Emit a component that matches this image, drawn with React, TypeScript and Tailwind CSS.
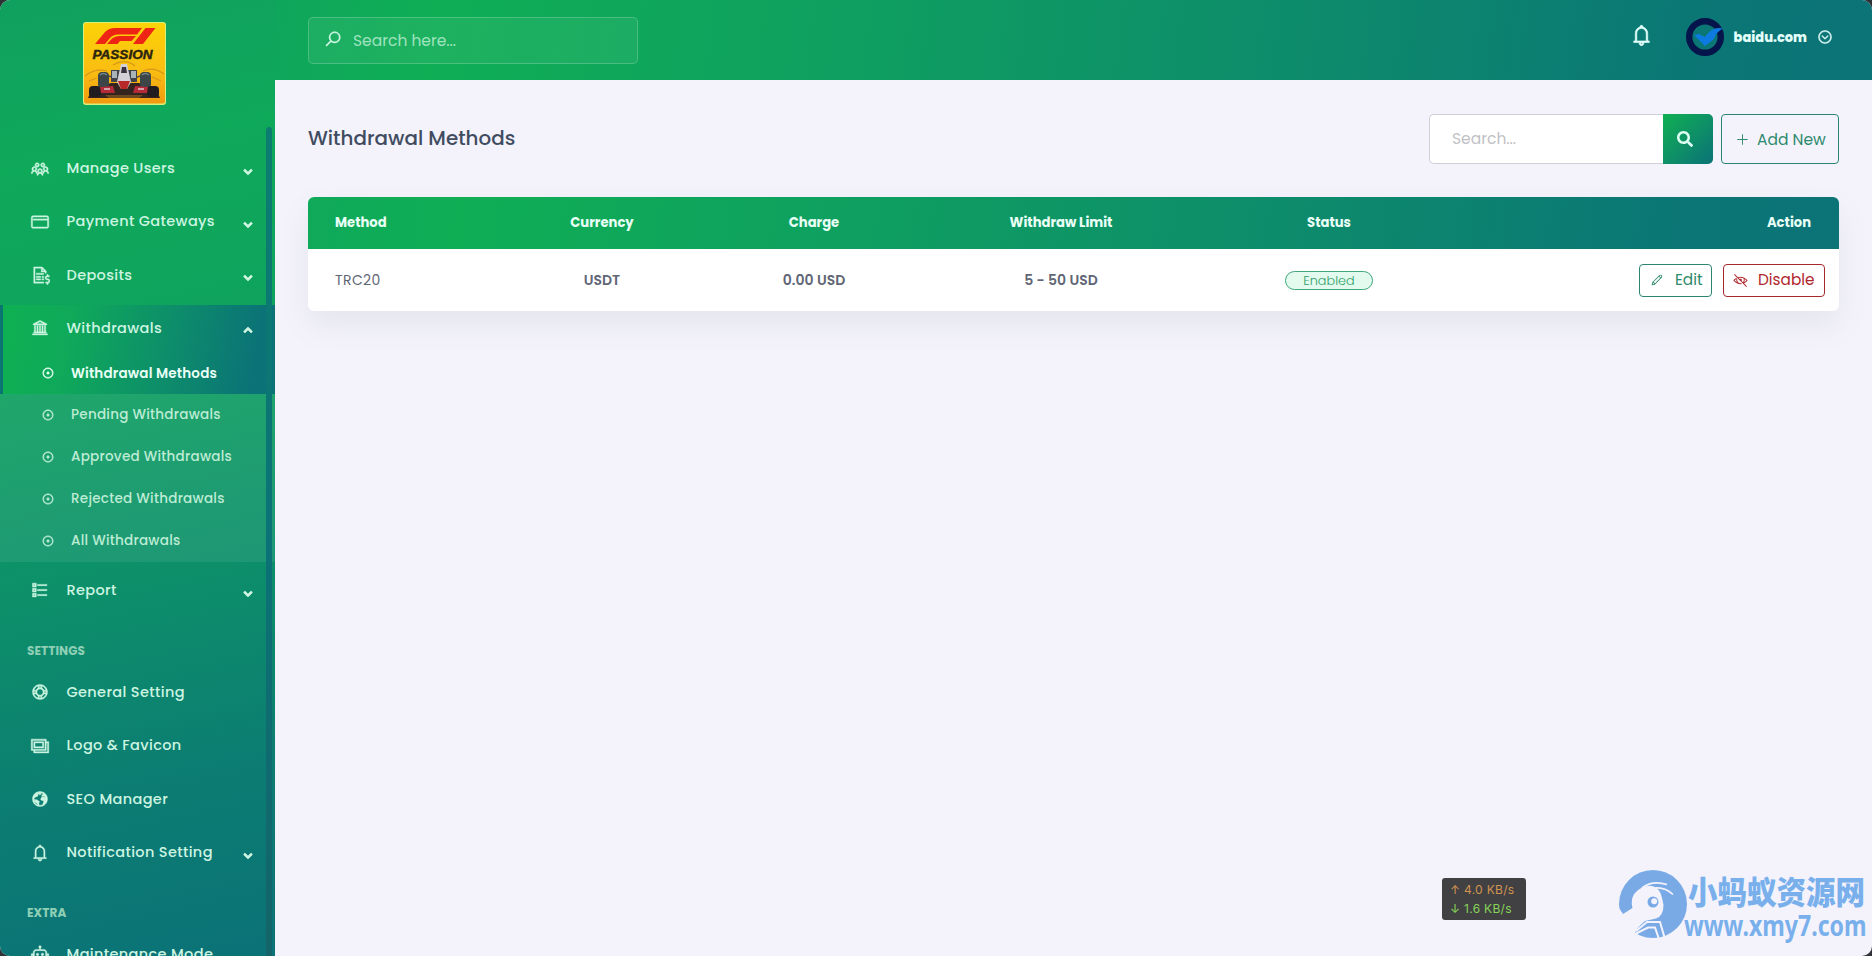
import type { ComponentType, ReactNode } from "react";
import {
  LiaUsersSolid, LiaCreditCard, LiaFileInvoiceDollarSolid, LiaUniversitySolid, LiaDotCircle, LiaListSolid,
  LiaLifeRing, LiaImages, LiaGlobeSolid, LiaBell, LiaRobotSolid, LiaSearchSolid, LiaChevronCircleDownSolid,
  LiaPlusSolid, LiaPenSolid, LiaEyeSlash,
} from "react-icons/lia";
import { FaAngleDown, FaAngleUp, FaSearch } from "react-icons/fa";

type Icon = ComponentType<{ className?: string }>;

function MenuItem({ icon: I, label, arrow }: { icon: Icon; label: string; arrow?: "up" | "down" }) {
  return (
    <a className="flex h-[46px] shrink-0 items-center pl-[30px] pr-[20px] pt-px text-[#cdf5e2]">
      <I className="size-5 shrink-0 [stroke-width:0.7px]" />
      <span className="ml-[16.500px] flex-1 whitespace-nowrap pt-px text-[14.5px] font-medium tracking-[0.350px]">{label}</span>
      {arrow === "down" && <FaAngleDown className="mt-[7px] size-[14px] [stroke-width:20px]" />}
      {arrow === "up" && <FaAngleUp className="mt-[3px] size-[14px] [stroke-width:20px]" />}
    </a>
  );
}

function SubItem({ label, active }: { label: string; active?: boolean }) {
  return (
    <a className={"flex h-[42px] items-center pl-[41px] " + (active ? "pt-[3px] text-[#e9fff6]" : "text-[#bdecd5]")}>
      <LiaDotCircle className="size-[14px] [stroke-width:1px]" />
      <span className={"ml-4 whitespace-nowrap pt-px text-[13.5px] " + (active ? "font-semibold tracking-[0.180px]" : "font-medium tracking-[0.270px]")}>{label}</span>
    </a>
  );
}

function Heading({ children }: { children: ReactNode }) {
  return <div className="flex h-5 items-center pl-[27px] text-[12px] font-bold tracking-[0.100px] text-[#8fcfb6]">{children}</div>;
}

function Logo() {
  return (
    <svg viewBox="0 0 83 83" className="size-[83px]">
      <defs>
        <linearGradient id="sun" x1="0" y1="0" x2="0" y2="1">
          <stop offset="0" stopColor="#fcd307" /><stop offset=".6" stopColor="#f9bd12" /><stop offset="1" stopColor="#f09a10" />
        </linearGradient>
      </defs>
      <rect width="83" height="83" rx="3" fill="#d8f07c" />
      <rect x="1" y="1" width="81" height="80.500" rx="2" fill="url(#sun)" />
      <path d="M12 22 L22 10 Q26 6 32 6 H59 L54 12.500 H35 Q30 12.500 27 16 L22 22Z M24 22 L29 16.500 Q32 14 36 14 H53 L48.500 19 H37 L34.500 22Z M50 22 L62.500 6 H72.500 L60 22Z" fill="#ee2414" />
      <text x="9.500" y="36.500" textLength="60" lengthAdjust="spacingAndGlyphs" fontFamily="Liberation Sans" fontWeight="bold" fontStyle="italic" fontSize="12" stroke="#2a2410" strokeWidth=".4" fill="#2a2410">PASSION</text>
      <path d="M2 54 Q12 46 24 49 M6 59 L14 56 M60 49 Q70 44 81 52 M69 55 L78 59 M30 43 Q42 36 52 44" stroke="#d8981a" strokeWidth="1.200" fill="none" />
      <path d="M5 76 L9 67 L28 61 H56 L73 67 L77 76Z" fill="#33241f" />
      <path d="M22 73 H60 L56 76 H26Z" fill="#6b4a22" />
      <path d="M19 52 L32 56 L36 60 M64 52 L51 56 L47 60" stroke="#55504c" strokeWidth="1.500" fill="none" />
      <rect x="15" y="50" width="11" height="16" rx="4" fill="#3c4548" /><rect x="57" y="50" width="11" height="16" rx="4" fill="#3c4548" />
      <path d="M17 53 Q20 50 24 53 M59 53 Q62 50 66 53" stroke="#74868a" strokeWidth="1.500" fill="none" />
      <path d="M28 48 H54 V60 H28Z" fill="#42424a" /><path d="M29 49 H34 V56 H29Z M48 49 H53 V56 H48Z" fill="#a9b3ba" />
      <path d="M38 42 H44 L48 60 L44 67 H38 L34 60Z" fill="#d3d0d6" /><path d="M39 45 H43 L44 51 H38Z" fill="#3a3440" /><path d="M35 59 H47 L44 67 H38Z" fill="#b82828" />
      <rect x="6" y="64" width="12" height="11" rx="4" fill="#201c20" /><rect x="64" y="64" width="12" height="11" rx="4" fill="#201c20" />
      <path d="M17 65 L30 64 L32 71 H18Z M65 65 L52 64 L50 71 H64Z" fill="#b32b38" />
      <path d="M21 67 H27 M55 67 H61" stroke="#e3c6cc" strokeWidth="1.600" />
    </svg>
  );
}

function Ant() {
  return (
    <svg viewBox="0 0 70 70" className="size-[70px]">
      <circle cx="35" cy="35" r="34" fill="#79aae6" />
      <path d="M-1 36 L5 45 L14.500 39 Q11 25 24 18.500 Q37 13 42.500 24 Q44 28 45.500 36 Q45.500 47 38 49.500 L27 52 Q22 56 19 60 L17 64 L14 70 H-1Z" fill="#f4f3fc" />
      <path d="M24 19 Q34 11 49 15.500 M32 20 Q45 16 55 25.500" stroke="#f4f3fc" strokeWidth="1.700" fill="none" />
      <circle cx="35" cy="33" r="5.500" fill="#79aae6" /><circle cx="36.200" cy="32.200" r="3" fill="#f4f3fc" />
      <path d="M18 62 L29 53 H42 L47 70" stroke="#f4f3fc" strokeWidth="2" fill="none" />
      <path d="M18 64.500 L30 58.500 H37 L41 70" stroke="#f4f3fc" strokeWidth="2" fill="none" />
    </svg>
  );
}

const cols = "grid grid-cols-[195px_198px_226px_268px_268px_1fr] items-center text-center";

export default function App() {
  return (
    <div className="h-[956px] w-[1872px] overflow-hidden bg-[#2f3236]">
      <div className="relative flex h-full overflow-hidden rounded-[10px] bg-[#f4f3fc] font-['Poppins','Inter',sans-serif]">
        <aside className="relative flex h-full w-[275px] shrink-0 flex-col overflow-hidden bg-[linear-gradient(168deg,#10a05f_0%,#0fa95a_17%,#0fa45d_33%,#0d9169_58%,#0c7d72_80%,#0b7277_100%)]">
          <div className="flex h-[145px] shrink-0 pl-[83px] pt-[22px]"><Logo /></div>
          <div className="flex flex-col gap-[7.200px]">
            <MenuItem icon={LiaUsersSolid} label="Manage Users" arrow="down" />
            <MenuItem icon={LiaCreditCard} label="Payment Gateways" arrow="down" />
            <MenuItem icon={LiaFileInvoiceDollarSolid} label="Deposits" arrow="down" />
          </div>
          <div className="mt-[7.400px] border-l-[3px] border-[#0b7574] bg-[linear-gradient(100deg,#0fb052_0%,#0fa95a_25%,#0d8c6b_62%,#0b7277_92%)] pb-px">
            <div className="-ml-[3px]">
              <MenuItem icon={LiaUniversitySolid} label="Withdrawals" arrow="up" />
              <SubItem label="Withdrawal Methods" active />
            </div>
          </div>
          <div className="bg-white/[0.070]">
            <SubItem label="Pending Withdrawals" />
            <SubItem label="Approved Withdrawals" />
            <SubItem label="Rejected Withdrawals" />
            <SubItem label="All Withdrawals" />
          </div>
          <div className="mt-[5px]"><MenuItem icon={LiaListSolid} label="Report" arrow="down" /></div>
          <div className="mt-[28px]"><Heading>SETTINGS</Heading></div>
          <div className="mt-[8px] flex flex-col gap-[7.500px]">
            <MenuItem icon={LiaLifeRing} label="General Setting" />
            <MenuItem icon={LiaImages} label="Logo & Favicon" />
            <MenuItem icon={LiaGlobeSolid} label="SEO Manager" />
            <MenuItem icon={LiaBell} label="Notification Setting" arrow="down" />
          </div>
          <div className="mt-[28px]"><Heading>EXTRA</Heading></div>
          <div className="mt-[8px]"><MenuItem icon={LiaRobotSolid} label="Maintenance Mode" /></div>
          <div className="absolute bottom-0 right-[3px] top-[127px] w-[6px] rounded-t bg-[linear-gradient(#0c7d70,#0b7277_50%,#146469)]" />
        </aside>

        <main className="flex flex-1 flex-col">
          <header className="flex h-20 shrink-0 items-start bg-[linear-gradient(98deg,#0fa65c_0%,#0fae55_10%,#0fa15f_33%,#0d8a6c_66%,#0b7775_88%,#0c7377_100%)] pl-[33px]">
            <div className="mt-[17px] flex h-[47px] w-[330px] items-center rounded-[5px] border border-white/20 bg-white/[0.060] pl-[15px]">
              <LiaSearchSolid className="-mt-1 size-[18px] text-[#d5fbe8] [stroke-width:0.8px]" />
              <span className="ml-[11px] text-[15.5px] text-[#9fe3bf]">Search here...</span>
            </div>
            <div className="ml-auto mt-[18px] flex h-[38px] items-center pr-[39px] text-[#e2fffb]">
              <LiaBell className="-mt-[3px] mr-[32px] size-[25px] [stroke-width:0.8px]" />
              <svg viewBox="0 0 38 38" className="size-[38px]">
                <circle cx="19" cy="19" r="15.800" fill="none" stroke="#05144a" strokeWidth="6.400" />
                <path d="M8 17 L13 16 L19 19 Q26 8 37 10.500 Q30 14 28 21 L19 28Z" fill="#0c7ae0" />
              </svg>
              <span className="ml-[10px] pt-px text-[13px] font-extrabold">baidu.com</span>
              <LiaChevronCircleDownSolid className="ml-[10px] size-[16px] [stroke-width:1px]" />
            </div>
          </header>

          <div className="flex flex-col px-[33px] pt-[34px]">
            <div className="flex h-[50px] items-center">
              <h1 className="text-[19.900px] font-medium text-[#414c60]">Withdrawal Methods</h1>
              <div className="ml-auto flex h-[50px] w-[284px]">
                <div className="flex flex-1 items-center rounded-l-[5px] border border-r-0 border-[#cfd0d8] bg-white pl-[22px] text-[15.5px] text-[#bfc1c6]">Search...</div>
                <div className="flex w-[50px] items-center justify-center rounded-r-[5px] bg-[linear-gradient(135deg,#10b052,#0e9166_50%,#0b7277)] pr-[6px]">
                  <FaSearch className="size-[16px] text-[#dcfff2]" />
                </div>
              </div>
              <div className="ml-2 flex h-[50px] w-[118px] items-center rounded-[4px] border border-[#2d8571] pl-[13px] pt-px text-[#2e8a6c]">
                <LiaPlusSolid className="size-[15px]" />
                <span className="ml-[7px] whitespace-nowrap text-[15.5px]">Add New</span>
              </div>
            </div>

            <div className="mt-[33px] overflow-hidden rounded-[6px] bg-white shadow-[0_14px_30px_rgba(110,115,100,0.100)]">
              <div className={cols + " h-[52px] bg-[linear-gradient(98deg,#0fa95a_0%,#0fae55_10%,#0fa15f_33%,#0d8a6c_66%,#0b7775_88%,#0c7377_100%)] text-[13.150px] font-bold text-[#e9fff6]"}>
                <span className="pl-[27px] text-left">Method</span>
                <span>Currency</span>
                <span>Charge</span>
                <span>Withdraw Limit</span>
                <span>Status</span>
                <span className="pr-[28px] text-right">Action</span>
              </div>
              <div className={cols + " h-[62px] text-[14px] font-semibold text-[#5f6675]"}>
                <span className="pl-[27px] text-left font-normal tracking-[0.400px]">TRC20</span>
                <span>USDT</span>
                <span>0.00 USD</span>
                <span>5 - 50 USD</span>
                <span className="flex justify-center">
                  <span className="flex h-[19px] w-[88px] items-center justify-center rounded-full border border-[#3fa87c] bg-[#e3fbee] pt-px text-[12.800px] font-light text-[#2f9f69]">Enabled</span>
                </span>
                <span className="flex justify-end gap-[11px] pr-[14px] text-[15.300px] font-normal">
                  <span className="flex h-[33px] w-[73px] items-center rounded-[4px] border border-[#2d8571] pl-[10px] text-[#2e8a6c]">
                    <LiaPenSolid className="size-[14px]" /><span className="ml-[11px] pt-px">Edit</span>
                  </span>
                  <span className="flex h-[33px] w-[102px] items-center rounded-[4px] border border-[#a5282d] pl-[9px] text-[#b0262b]">
                    <LiaEyeSlash className="size-[15px]" /><span className="ml-[10px] pt-px">Disable</span>
                  </span>
                </span>
              </div>
            </div>
          </div>
        </main>

        <div className="absolute left-[1442px] top-[878px] flex h-[42px] w-[84px] flex-col justify-center rounded-[3px] bg-[#414144] pl-[8px] font-['Inter',sans-serif] text-[12px] leading-[19px] tracking-[0.300px]">
          <span className="flex text-[#d1934f]"><span className="w-[14px]">↑</span>4.0 KB/s</span>
          <span className="flex text-[#86d457]"><span className="w-[14px]">↓</span>1.6 KB/s</span>
        </div>
        <div className="absolute left-[1618px] top-[869px] flex">
          <Ant />
          <div className="-ml-[4px] flex w-[184px] flex-col whitespace-nowrap text-[#79b0ec]">
            <span className="ml-[4px] origin-center scale-y-[1.080] font-['Noto_Sans_CJK_SC',sans-serif] text-[29.500px] font-black leading-[43px]">小蚂蚁资源网</span>
            <span className="w-max origin-left scale-x-[0.825] font-['Noto_Sans',sans-serif] text-[28px] font-bold leading-[26px]">www.xmy7.com</span>
          </div>
        </div>
      </div>
    </div>
  );
}
